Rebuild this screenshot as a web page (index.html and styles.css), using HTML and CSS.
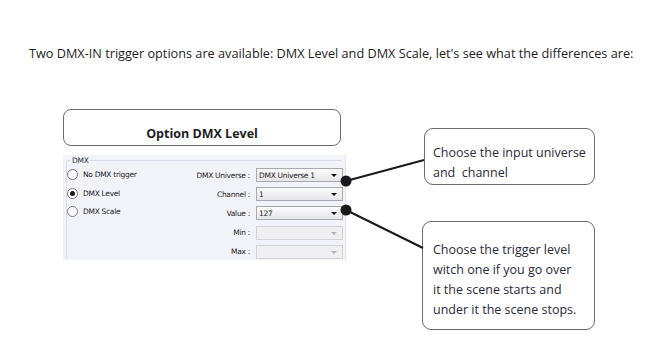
FILE: index.html
```html
<!DOCTYPE html>
<html lang="en">
<head>
    <meta charset="UTF-8">
    <title>DMX-IN trigger options</title>
    <link rel="stylesheet" href="styles.css">
</head>
<body>
    <!-- Intro -->
    <p class="intro">Two DMX-IN trigger options are available: DMX Level and DMX Scale, let's see what the differences are:</p>

    <!-- Figure -->
    <div class="figure">
        <div class="left">
            <div class="option-box">Option DMX Level</div>

            <div class="panel">
                <fieldset class="group">
                    <legend>DMX</legend>
                    <div class="radios">
                        <div class="radio"><span class="dot"></span>No DMX trigger</div>
                        <div class="radio"><span class="dot on"></span>DMX Level</div>
                        <div class="radio"><span class="dot"></span>DMX Scale</div>
                    </div>
                    <div class="fields">
                        <span class="label">DMX Universe :</span>
                        <div class="combo">DMX Universe 1<span class="arrow"></span></div>
                        <span class="label">Channel :</span>
                        <div class="combo">1<span class="arrow"></span></div>
                        <span class="label">Value :</span>
                        <div class="combo">127<span class="arrow"></span></div>
                        <span class="label">Min :</span>
                        <div class="combo off"><span class="arrow"></span></div>
                        <span class="label">Max :</span>
                        <div class="combo off"><span class="arrow"></span></div>
                    </div>
                </fieldset>
            </div>
        </div>

        <div class="right">
            <div class="callout first">Choose the input universe<br>and&nbsp; channel</div>
            <div class="callout second">Choose the trigger level<br>witch one if you go over<br>it the scene starts and<br>under it the scene stops.</div>
        </div>

        <!-- connectors -->
        <svg class="links" width="658" height="220" viewBox="0 0 658 220">
            <line x1="346" y1="72" x2="424" y2="51" stroke="#1a1a1a" stroke-width="2"/>
            <line x1="346" y1="101" x2="423" y2="139" stroke="#1a1a1a" stroke-width="2"/>
            <circle cx="346" cy="72" r="5.5" fill="#1a1a1a"/>
            <circle cx="346" cy="101" r="5.5" fill="#1a1a1a"/>
        </svg>
    </div>
</body>
</html>
```

FILE: styles.css
```css
body {
    margin: 0;
    padding: 0;
    background-color: #ffffff;
    font-family: "Open Sans", "Noto Sans", sans-serif;
    color: #1e1e1e;
}
.intro {
    margin: 0;
    padding: 45px 0 0 29px;
    font-size: 12.7px;
    line-height: 16px;
    white-space: nowrap;
}
.figure {
    position: relative;
    display: flex;
    margin-top: 48px;
    padding-left: 63px;
}
.left {
    width: 284px;
}
.option-box {
    width: 276px;
    height: 32px;
    padding-bottom: 3px;
    border: 1px solid #6b6b6b;
    border-radius: 8px;
    display: flex;
    align-items: flex-end;
    justify-content: center;
    font-weight: bold;
    font-size: 12.5px;
    line-height: 16px;
}
.panel {
    margin-top: 9px;
    width: 283px;
    height: 105px;
    background-color: #f2f2f9;
    border-right: 1px solid #e4e4f0;
    box-sizing: border-box;
    padding: 1px 4px 0 3px;
    font-family: "DejaVu Sans", sans-serif;
    font-size: 7.5px;
    letter-spacing: -0.3px;
    color: #222;
}
.group {
    margin: 0;
    padding: 3px 0 0 0;
    border: 1px solid #dcdcea;
    border-radius: 3px;
    border-right: none;
    border-bottom: none;
    height: 103px;
    box-sizing: border-box;
    display: flex;
}
.group legend {
    padding: 0 2px;
    margin-left: 3px;
    color: #333;
}
.radios {
    width: 110px;
    display: flex;
    flex-direction: column;
    gap: 7.5px;
    padding-top: 1px;
}
.radio {
    display: flex;
    align-items: center;
    gap: 5px;
    height: 11px;
}
.dot {
    position: relative;
    width: 9px;
    height: 9px;
    border: 1px solid #7a7a7a;
    border-radius: 50%;
    background-color: #ffffff;
}
.dot.on::after {
    content: "";
    position: absolute;
    left: 2px;
    top: 2px;
    width: 5px;
    height: 5px;
    border-radius: 50%;
    background-color: #1a1a1a;
}
.fields {
    display: grid;
    grid-template-columns: 73px 87px;
    column-gap: 6px;
    row-gap: 4.5px;
    align-items: center;
}
.label {
    text-align: right;
}
.combo {
    position: relative;
    height: 12px;
    border: 1px solid #a8a8b0;
    background: linear-gradient(#fbfbfb, #e6e6ea);
    padding-left: 2px;
    line-height: 13px;
}
.combo.off {
    background: #efeff2;
    border-color: #d2d2d8;
}
.arrow {
    position: absolute;
    right: 5px;
    top: 5px;
    width: 0;
    height: 0;
    border-left: 3px solid transparent;
    border-right: 3px solid transparent;
    border-top: 3px solid #111;
}
.combo.off .arrow {
    border-top-color: #b4b4b8;
}
.right {
    margin-left: 75px;
}
.callout {
    border: 1px solid #6b6b6b;
    border-radius: 9px;
    font-size: 12.5px;
    line-height: 20px;
    color: #2a2a3a;
    white-space: nowrap;
}
.callout.first {
    margin-top: 19px;
    margin-left: 2px;
    width: 161px;
    height: 41px;
    padding: 14px 0 0 8px;
}
.callout.second {
    margin-top: 36px;
    width: 161px;
    height: 89px;
    padding: 18px 0 0 10px;
}
.links {
    position: absolute;
    left: 0;
    top: 0;
    pointer-events: none;
}
```
